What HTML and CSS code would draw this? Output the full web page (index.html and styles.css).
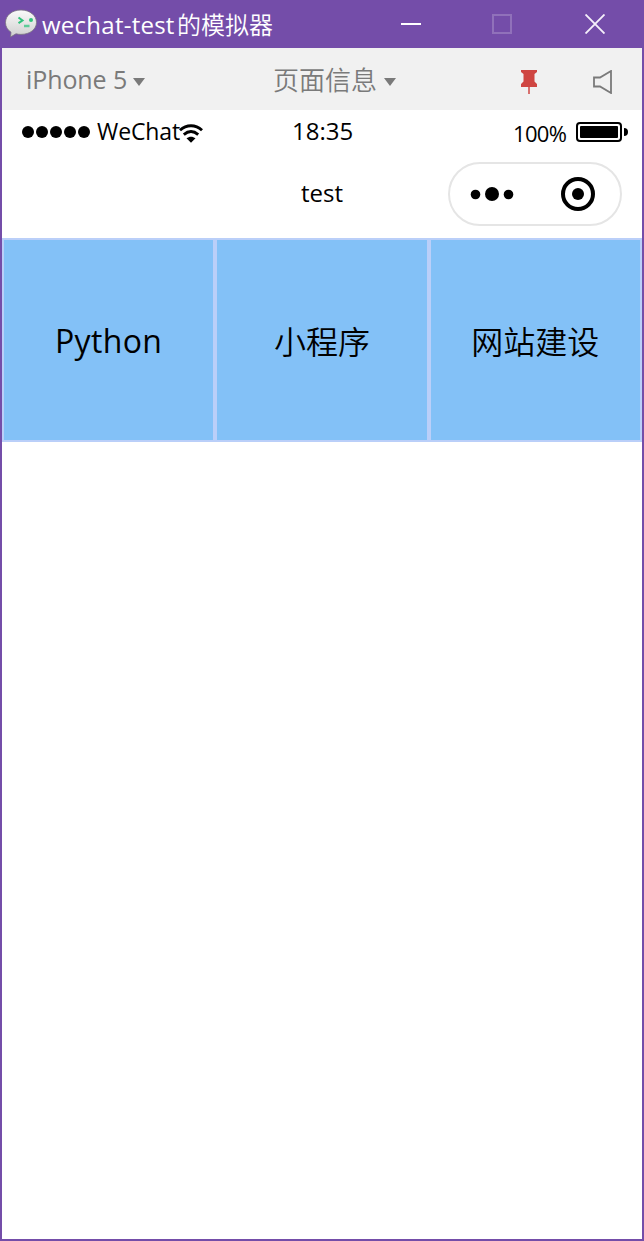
FILE: index.html
```html
<!DOCTYPE html>
<html lang="zh-CN">
<head>
<meta charset="utf-8">
<title>wechat-test的模拟器</title>
<link rel="stylesheet" href="styles.css">
</head>
<body>
<div class="window">
  <header class="titlebar">
    <svg class="app-icon" width="34" height="30" viewBox="0 0 34 30">
      <defs><linearGradient id="bubble" x1="0" y1="0" x2="0" y2="1"><stop offset="0" stop-color="#fafafa"/><stop offset="1" stop-color="#cfcfcf"/></linearGradient></defs>
      <path d="M17 1C8 1 1.500 6.500 1.500 13.500c0 4.200 2 7.500 5.500 9.700L6.500 28l5.500-3.200c1.600.4 3.300.6 5 .6 9 0 15.500-5.200 15.500-12S26 1 17 1z" fill="url(#bubble)" stroke="#777080" stroke-width=".8"/>
      <path d="M14.500 8.500l4 3-4 2.700" fill="none" stroke="#2fc27b" stroke-width="2"/>
      <circle cx="27" cy="11" r="2" fill="#2fc27b"/><path d="M20 17h5.500" stroke="#5dcc98" stroke-width="2.500"/>
    </svg>
    <h1 class="title"><span class="title-latin">wechat-test</span>的模拟器</h1>
    <div class="controls">
      <svg width="20" height="20" viewBox="0 0 20 20"><path d="M0 10h20" stroke="#fff" stroke-width="2"/></svg>
      <svg width="20" height="20" viewBox="0 0 20 20"><path d="M1 1h18v18H1z" fill="none" stroke="#9071ba" stroke-width="2"/></svg>
      <svg width="20" height="20" viewBox="0 0 20 20"><path d="M.5.5l19 19M19.500.5l-19 19" stroke="#f4effa" stroke-width="1.900"/></svg>
    </div>
  </header>
  <nav class="toolbar">
    <div class="device"><span class="device-name">iPhone 5</span><i class="caret"></i></div>
    <div class="page-info"><span>页面信息</span><i class="caret"></i></div>
    <div class="tools">
      <svg width="16" height="24" viewBox="0 0 16 24"><path d="M0 0h16v2l-2.500 2v7.500L16 14v3H0v-3l2.500-2.500V4L0 2z" fill="#cf4642"/><path d="M8 16v8" stroke="#cf4642" stroke-width="1.500"/></svg>
      <svg width="20" height="24" viewBox="0 0 20 24"><path d="M1 7.500h6L18 1v22L7 16.500H1z" fill="none" stroke="#7a7a7a" stroke-width="1.800"/></svg>
    </div>
  </nav>
  <div class="statusbar">
    <div class="signal"><i></i><i></i><i></i><i></i><i></i></div>
    <span class="carrier">WeChat</span>
    <svg class="wifi" width="24" height="19" viewBox="0 0 24 19"><path d="M1 6.300C7.500.3 16.500.3 23 6.300M4.800 10.600c4.500-3.800 9.900-3.800 14.400 0" fill="none" stroke="#000" stroke-width="2.900"/><path d="M7.500 14.300c2.800-2.200 6.200-2.200 9 0L12 18.700z"/></svg>
    <span class="clock">18:35</span>
    <span class="percent">100%</span>
    <div class="battery"><i class="charge"></i></div><i class="battery-tip"></i>
  </div>
  <div class="navbar">
    <span class="nav-title">test</span>
    <div class="capsule">
      <svg width="44" height="16" viewBox="0 0 44 16"><circle cx="5.500" cy="8.500" r="4.800"/><circle cx="22" cy="8" r="7"/><circle cx="38.500" cy="8.500" r="4.800"/></svg>
      <svg width="34" height="34" viewBox="0 0 34 34"><circle cx="17" cy="17" r="15" fill="none" stroke="#000" stroke-width="4"/><circle cx="17" cy="17" r="6"/></svg>
    </div>
  </div>
  <main class="grid">
    <div class="cell"><span class="python">Python</span></div>
    <div class="cell"><span>小程序</span></div>
    <div class="cell"><span>网站建设</span></div>
  </main>
</div>
</body>
</html>
```
FILE: styles.css
```css
* { box-sizing: border-box; }
body { margin: 0; font-family: "Open Sans", "Noto Sans CJK SC", sans-serif; color: #000; }
svg { display: block; flex: none; }
.window { height: 1241px; border: 2px solid #744da9; border-top: 0; background: #fff; }
.titlebar { height: 48px; background: #744da9; display: flex; align-items: center; padding-left: 2px; }
.title { margin: 2px 0 0 4px; color: #fff; font-size: 24px; font-weight: 350; line-height: 48px; white-space: nowrap; width: 240px; }
.title-latin { display: inline-block; width: 135px; font-weight: 400; letter-spacing: .25px; }
.controls { display: flex; gap: 72px; margin-left: auto; padding-right: 37px; }
.controls svg:nth-child(2) { margin: 0 1px 0 -1px; }
.toolbar { height: 62px; background: #f1f1f1; color: #7a7a7a; display: flex; align-items: center; padding: 0 29px 0 24px; font-size: 26px; font-weight: 350; line-height: 62px; }
.device, .page-info { display: flex; align-items: center; white-space: nowrap; }
.device { width: 247px; }
.device-name { width: 107px; font-size: 25px; font-weight: 400; letter-spacing: -.1px; }
.page-info span { width: 111px; padding-top: 1px; }
.caret { border: 6px solid transparent; border-top: 8px solid #7a7a7a; border-bottom: 0; margin-top: 5px; }
.tools { display: flex; gap: 56px; margin: 5px 0 0 auto; }
.statusbar { height: 44px; display: flex; align-items: center; padding: 0 14px 0 20px; font-size: 24px; line-height: 42px; white-space: nowrap; }
.signal { display: flex; gap: 2px; width: 75px; }
.signal i { width: 12px; height: 12px; border-radius: 50%; background: #000; }
.carrier { width: 82px; font-size: 23px; letter-spacing: -.1px; margin-bottom: 2px; }
.wifi { margin-top: 2px; }
.clock { margin: 0 0 2px 89px; width: 60px; }
.percent { margin-left: auto; width: 63px; font-size: 22px; letter-spacing: -.7px; padding-top: 1px; }
.battery { width: 46px; height: 20px; border: 2px solid #000; border-radius: 4px; padding: 2px; display: flex; }
.charge { flex: 1; background: #000; border-radius: 1px; }
.battery-tip { width: 4px; height: 8px; margin-left: 2px; border-radius: 0 4px 4px 0; background: #000; }
.navbar { height: 84px; display: flex; align-items: center; justify-content: space-between; padding: 0 20px 4px 299px; font-size: 24px; }
.nav-title { padding-bottom: 4px; }
.capsule { width: 174px; height: 64px; border: 2px solid #e5e5e5; border-radius: 32px; display: flex; align-items: center; justify-content: space-between; padding: 0 25px 0 20px; }
.grid { display: grid; grid-template-columns: repeat(3, 1fr); height: 204px; font-size: 32px; font-weight: 350; }
.cell { border: 2px solid #bacff9; background: #83c1f7; display: flex; align-items: center; justify-content: center; }
.python { font-weight: 400; letter-spacing: .35px; }
```
